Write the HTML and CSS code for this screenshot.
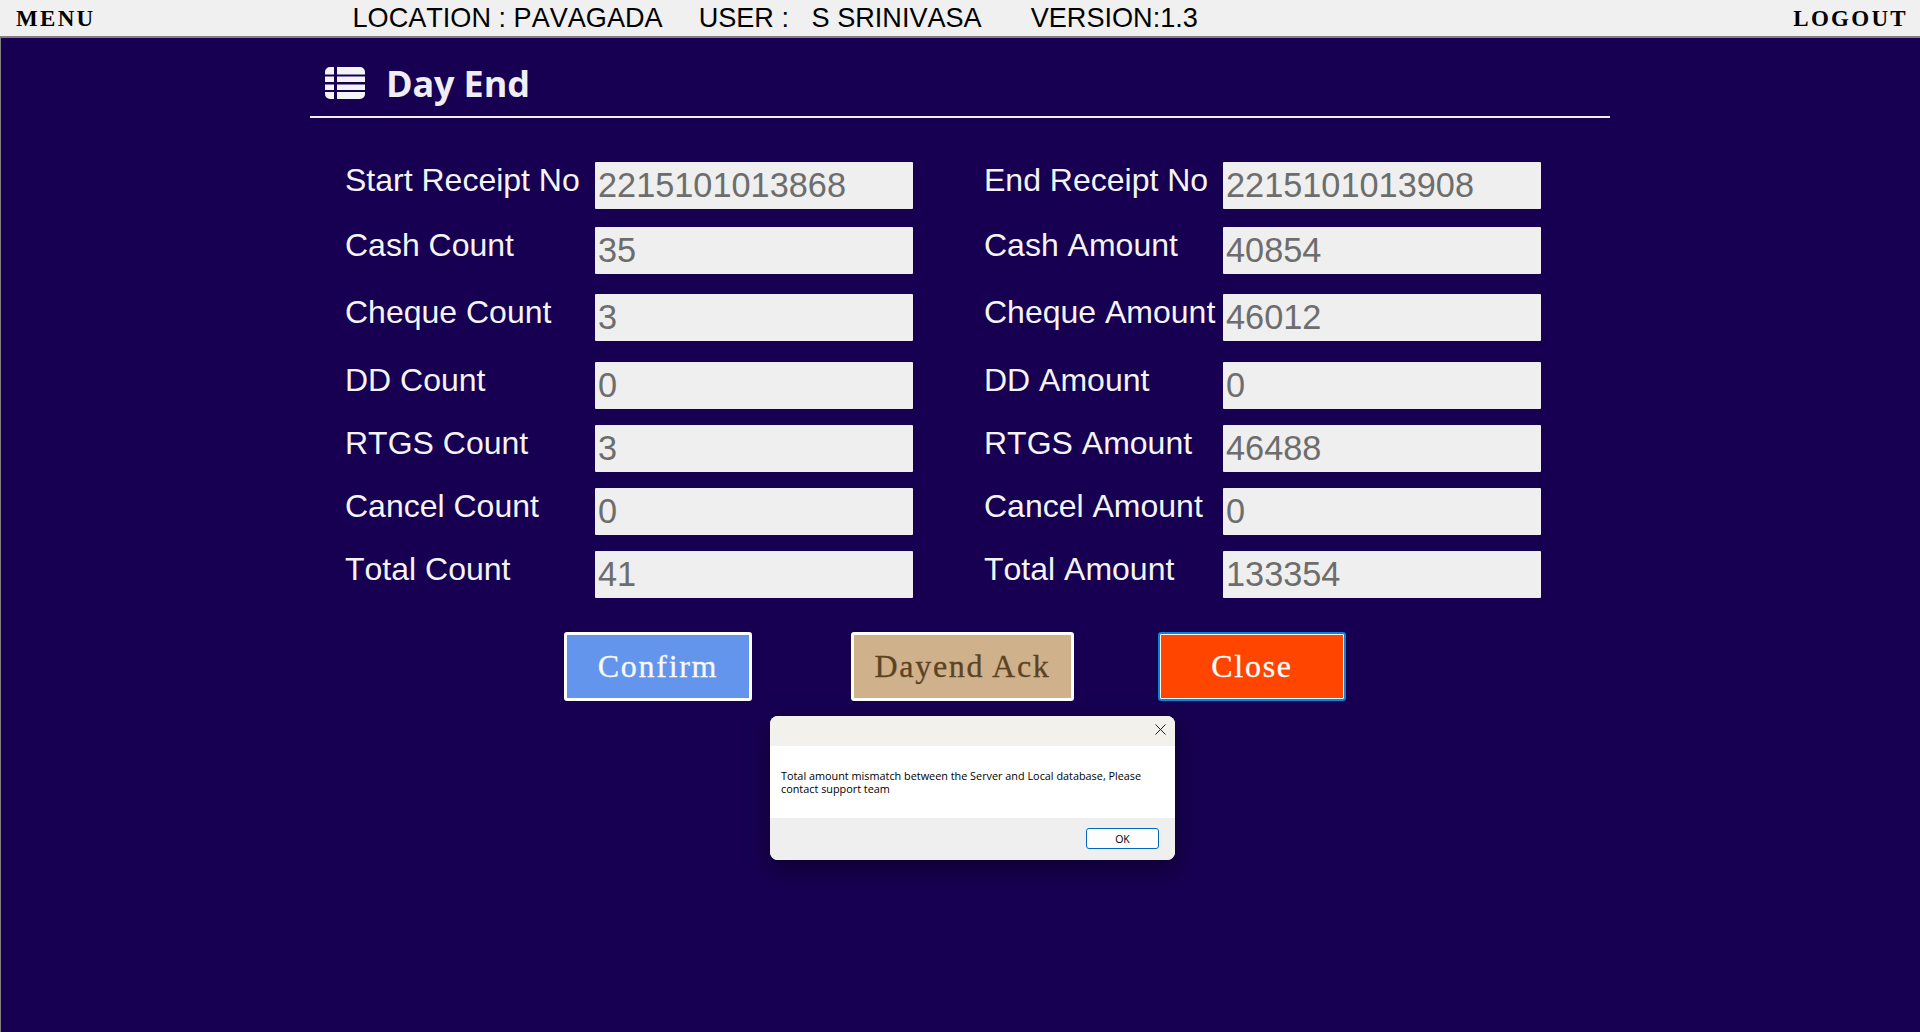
FILE: index.html
```html
<!DOCTYPE html>
<html lang="en">
<head>
<meta charset="utf-8">
<title>Day End</title>
<link rel="stylesheet" href="styles.css">
</head>
<body>
<header class="topbar">
  <a class="nav-link menu">MENU</a>
  <div class="status">
    <span class="loc">LOCATION : PAVAGADA</span>
    <span class="user">USER :&nbsp;&nbsp; S SRINIVASA</span>
    <span class="ver">VERSION:1.3</span>
  </div>
  <a class="nav-link logout">LOGOUT</a>
</header>
<main class="page">
  <div class="panel">
    <h1 class="title">
      <svg class="title-icon" viewBox="0 0 40 32" aria-hidden="true">
        <path d="M0 5a5 5 0 0 1 5-5h4v7.500H0zM0 9.500h9V15H0zM0 17.500h9V23H0zM0 25h9v7H5a5 5 0 0 1-5-5zM12 0h23a5 5 0 0 1 5 5v2.500H12zM12 9.500h28V15H12zM12 17.500h28V23H12zM12 25h28v2a5 5 0 0 1-5 5H12z" fill="#f4f4f8"/>
      </svg>
      <span>Day End</span>
    </h1>
    <div class="form">
      <label>Start Receipt No</label><div class="field">2215101013868</div>
      <label>End Receipt No</label><div class="field">2215101013908</div>
      <label>Cash Count</label><div class="field">35</div>
      <label>Cash Amount</label><div class="field">40854</div>
      <label>Cheque Count</label><div class="field">3</div>
      <label>Cheque Amount</label><div class="field">46012</div>
      <label>DD Count</label><div class="field">0</div>
      <label>DD Amount</label><div class="field">0</div>
      <label>RTGS Count</label><div class="field">3</div>
      <label>RTGS Amount</label><div class="field">46488</div>
      <label>Cancel Count</label><div class="field">0</div>
      <label>Cancel Amount</label><div class="field">0</div>
      <label>Total Count</label><div class="field">41</div>
      <label>Total Amount</label><div class="field">133354</div>
    </div>
    <div class="actions">
      <button class="btn confirm">Confirm</button>
      <button class="btn ack">Dayend Ack</button>
      <button class="btn close">Close</button>
    </div>
  </div>
</main>
<div class="dialog" role="alertdialog">
  <div class="dialog-head">
    <svg class="dialog-x" viewBox="0 0 11 11" aria-hidden="true"><path d="M.5.500l10 10M10.500.500l-10 10" stroke="#222" stroke-width="1" fill="none"/></svg>
  </div>
  <div class="dialog-body">Total amount mismatch between the Server and Local database, Please contact support team</div>
  <div class="dialog-foot"><button class="dialog-ok">OK</button></div>
</div>
</body>
</html>
```
FILE: styles.css
```css
* { box-sizing: border-box; }
html, body { height: 100%; }
body {
  margin: 0;
  display: flex;
  flex-direction: column;
  background: #170052;
  font-family: "Liberation Sans", Arial, sans-serif;
  font-kerning: none;
  overflow: hidden;
}
.topbar {
  flex: none;
  height: 38px;
  background: #f0f0f0;
  border-bottom: 2px solid #808080;
  display: flex;
  align-items: center;
  padding: 0 12px 0 16px;
  color: #000;
}
.nav-link {
  font-family: "Liberation Serif", serif;
  font-size: 23px;
  font-weight: 700;
  padding-top: 2px;
  letter-spacing: 2.300px;
}
.status {
  flex: 1;
  display: flex;
  font-size: 27.100px;
  line-height: 34px;
  padding-left: 257px;
}
.user { margin-left: 36px; }
.ver { margin-left: 49px; }
.page {
  flex: 1;
  border-left: 1px solid #808080;
  padding-left: 309px;
}
.panel { width: 1300px; }
.title {
  margin: 0;
  height: 80px;
  border-bottom: 2px solid #f0f0f0;
  display: flex;
  align-items: center;
  padding: 13px 0 0 15px;
  color: #eeeef4;
  font-family: "Open Sans", sans-serif;
  font-size: 36px;
  font-weight: 700;
  letter-spacing: -.150px;
}
.title-icon { width: 40px; height: 32px; margin-right: 21px; margin-bottom: 2px; }
.form {
  display: grid;
  grid-template-columns: 250px 318px 71px 239px 318px;
  grid-template-rows: 65px 67px 68px 63px 63px 63px 47px;
  margin: 44px 0 0 35px;
  align-items: start;
}
.form label {
  color: #f4f4f4;
  font-size: 32px;
  line-height: 36px;
  white-space: nowrap;
}
.form label:nth-of-type(even) { grid-column: 4; }
.field {
  height: 47px;
  background: #efefef;
  color: #6d6d6d;
  font-size: 34.300px;
  line-height: 47px;
  padding: 0 3px;
  border-radius: 1px;
}
.actions {
  display: flex;
  margin: 34px 0 0 254px;
}
.btn {
  height: 69px;
  font-family: "Liberation Serif", serif;
  font-size: 32px;
  letter-spacing: 1.700px;
  -webkit-text-stroke: .3px currentColor;
  border: 3px solid #fff;
  border-radius: 3px;
  padding: 0;
}
.confirm { width: 188px; background: #6495ed; color: #f8f8f8; }
.ack { width: 223px; margin-left: 99px; background: #cfb18b; color: #5c4322; }
.close { width: 188px; margin-left: 84px; background: #ff4500; color: #fdfdfd; border: 2px solid #0a84d8; box-shadow: inset 0 0 0 1px #fff; }
.dialog {
  position: absolute;
  left: 770px;
  top: 716px;
  width: 405px;
  height: 144px;
  background: #fff;
  border-radius: 8px;
  overflow: hidden;
  box-shadow: 0 8px 24px rgba(0, 0, 0, .45);
  display: flex;
  flex-direction: column;
  font-family: "Open Sans", sans-serif;
  font-kerning: normal;
  color: #000;
}
.dialog-head {
  height: 30px;
  background: #f3f1ec;
  display: flex;
  justify-content: flex-end;
  align-items: center;
  padding: 0 9px 0 0;
}
.dialog-x { width: 11px; height: 11px; margin-bottom: 3px; }
.dialog-body {
  flex: 1;
  font-size: 10.850px;
  line-height: 13px;
  padding: 23px 30px 0 11px;
}
.dialog-foot {
  height: 42px;
  background: #efefef;
  padding: 10px 16px 0 0;
  display: flex;
  justify-content: flex-end;
  align-items: flex-start;
}
.dialog-ok {
  width: 73px;
  height: 21px;
  background: #fdfdfd;
  border: 1px solid #0067c0;
  border-radius: 3px;
  font-family: "Open Sans", sans-serif;
  font-size: 10.500px;
  color: #000;
  padding: 0;
}
```
